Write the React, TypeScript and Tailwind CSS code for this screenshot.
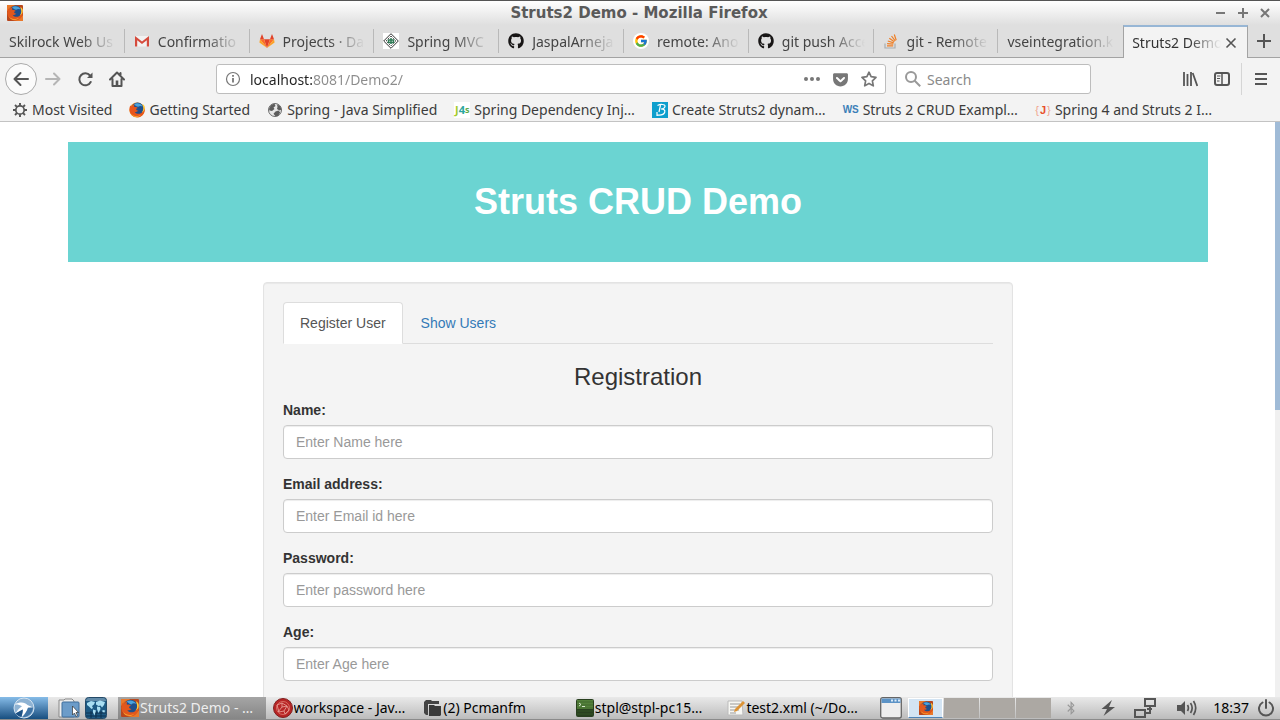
import type { ReactNode } from "react";
import { FaBluetoothB, FaGetPocket, FaGithub } from "react-icons/fa";
import { FcGoogle } from "react-icons/fc";

const svg = "h-4 w-4 shrink-0";

function FirefoxIcon({ size = "h-4 w-4", boxed = false }: { size?: string; boxed?: boolean }) {
  return (
    <svg viewBox="0 0 16 16" className={`${size} shrink-0`} aria-hidden="true">
      {boxed && <rect width="16" height="16" rx="1" fill="#b8461d" />}
      {boxed && <path d="M0 6V0h8L4 5zM16 10v6H6l6-2z" fill="#e9782a" />}
      <circle cx="8" cy="8" r="7.6" fill={boxed ? "#d9641c" : "#f08a1c"} />
      <circle cx="8.6" cy="6.8" r="6.2" fill="#1f4f8c" />
      <path d="M5 2.2C8 .4 12 1.400 13.600 4.500c-1.600-1-3.200-.7-4.400.3-1.600-.4-2.800-1.300-4.200-2.600z" fill="#4aa3dc" />
      <path d="M1.200 3.500C.1 6.200.2 9.500 2 12c2.600 3.600 7.600 4.200 10.900 1.700 2.600-2 3.500-5.300 2.500-8.500-.3 3.400-2 5.900-4.700 6.500-2.600.5-4.400-.5-5.100-2 1.500.5 2.700.1 3.800-.9-1.600-.2-2.300-.9-2.200-2l1.600-.9c-.9-1-2.200-1.200-3.500-.8-.3-1-.2-1.800.2-2.600-1.500.3-2.300 1-2.900 1.900z" fill={boxed ? "#e2571c" : "#e8551b"} />
      <path d="M13.700 3.400c1 2.500.8 5.200-1 7 2.300-.8 3.500-3 3-5.800-.5-1.400-1.100-2-2.200-2.700z" fill="#ffc93a" />
      <path d="M2 11.500c2.400 3 6.700 3.600 10 1.300-2.600 3.300-8.400 2.700-10-1.300z" fill="#f9b233" />
    </svg>
  );
}

function GmailIcon() {
  return (
    <svg viewBox="0 0 16 16" className={svg} aria-hidden="true">
      <path d="M1 3h14v10.500H1z" fill="#f2f2f2" />
      <path d="M1 13.500V3l7 5.500L15 3v10.500h-2.200V7.300L8 11 3.200 7.300v6.200z" fill="#d54b3d" />
    </svg>
  );
}

function GitlabIcon() {
  return (
    <svg viewBox="0 0 16 16" className={svg} aria-hidden="true">
      <path d="M8 15 5 6.200h6z" fill="#e24329" />
      <path d="M8 15 5 6.200H1zM8 15l3-8.800h4z" fill="#fc6d26" />
      <path d="M8 15 .4 9.400 1 6.200zM8 15l7.600-5.600L15 6.200z" fill="#fca326" />
      <path d="M1 6.200 3 1l2 5.200zM15 6.200 13 1l-2 5.200z" fill="#e24329" />
    </svg>
  );
}

function DiamondIcon() {
  return (
    <svg viewBox="0 0 16 16" className={svg} fill="none" aria-hidden="true">
      <rect width="16" height="16" fill="#fff" />
      <path d="M8 .7 15.300 8 8 15.300.7 8z" stroke="#333" />
      <path d="M8 3 13 8l-5 5-5-5z" stroke="#555" strokeDasharray="2 1" />
      <path d="M5.500 7h5v2.500h-5zM8 5v6" stroke="#2f7a55" strokeWidth="1.500" />
    </svg>
  );
}

function StackIcon() {
  return (
    <svg viewBox="0 0 16 16" className={svg} fill="none" aria-hidden="true">
      <path d="M2 10.500V15h10v-4.500" stroke="#a9adb0" strokeWidth="1.200" />
      <path d="M4 12.800h6.200M4.100 10.600l6.200.6M4.800 8l5.900 1.900M6.300 5.300l5 3.500M8.500 3l3.700 4.900M11.300 1.500l1.900 5.800" stroke="#ef7f26" strokeWidth="1.200" />
    </svg>
  );
}

function GoogleBadge() {
  return (
    <span className="flex h-4 w-4 shrink-0 items-center justify-center rounded-full bg-white">
      <FcGoogle size={14} />
    </span>
  );
}

function GlobeIcon() {
  return (
    <svg viewBox="0 0 16 16" className={svg} aria-hidden="true">
      <circle cx="8" cy="8" r="6.500" fill="#e6e6e6" stroke="#6b6b6b" strokeWidth="1" />
      <path d="M2 7c.6-3 3-5 5.500-5.200L8.500 4 6.500 5.500l1 1.500-2.500 2-2.500-.5zM10 2.200l3.300 2 1.200 3.300-2 1-2.500-1.500.5-2zM8.500 9.500l3-1 1.700 2L11 14l-2.500.3-2-2.500z" fill="#5c5c5c" />
    </svg>
  );
}

function GearIcon() {
  return (
    <svg viewBox="0 0 16 16" className={svg} fill="none" stroke="#555" aria-hidden="true">
      <circle cx="8" cy="8" r="4.200" strokeWidth="1.700" />
      <path d="M8 1v2.500M8 12.500V15M1 8h2.500M12.500 8H15M3 3l1.900 1.900M11.100 11.100 13 13M13 3l-1.900 1.900M4.900 11.100 3 13" strokeWidth="1.900" />
    </svg>
  );
}

type Tab = { title: string; icon?: ReactNode };
const tabs: Tab[] = [
  { title: "Skilrock Web Us" },
  { title: "Confirmatio", icon: <GmailIcon /> },
  { title: "Projects · Da", icon: <GitlabIcon /> },
  { title: "Spring MVC", icon: <DiamondIcon /> },
  { title: "JaspalArneja", icon: <FaGithub className="shrink-0 text-[#181616]" size={16} /> },
  { title: "remote: Ano", icon: <GoogleBadge /> },
  { title: "git push Acce", icon: <FaGithub className="shrink-0 text-[#181616]" size={16} /> },
  { title: "git - Remote", icon: <StackIcon /> },
  { title: "vseintegration.k" },
];

const bookmarks: { title: string; icon: ReactNode }[] = [
  { title: "Most Visited", icon: <GearIcon /> },
  { title: "Getting Started", icon: <FirefoxIcon /> },
  { title: "Spring - Java Simplified", icon: <GlobeIcon /> },
  {
    title: "Spring Dependency Inj…",
    icon: (
      <span className="flex h-4 w-4 shrink-0 items-center justify-center bg-white text-[11px] leading-4 font-bold text-[#2ba6a0]" aria-hidden="true">
        <span className="text-[#a3cb2b]">J</span>4<span className="text-[9px] text-[#5daa4a]">s</span>
      </span>
    ),
  },
  {
    title: "Create Struts2 dynam…",
    icon: (
      <svg viewBox="0 0 16 16" className={svg} fill="none" aria-hidden="true">
        <rect width="16" height="16" fill="#0e9fcd" />
        <path d="M5.500 3.500c2.500-1.500 8-1.500 7.500 1-.4 1.800-2.500 2.500-4 2.500 2.500 0 4.500 1 3.700 3.300-.8 2.400-3.700 3-7.200 2.700M8.500 3 7 10M5 10v4" stroke="#fff" strokeWidth="1.200" />
      </svg>
    ),
  },
  {
    title: "Struts 2 CRUD Exampl…",
    icon: (
      <span className="w-4 shrink-0 text-center font-['Liberation_Sans'] text-[10px] leading-4 font-bold text-[#3c7fb8]" aria-hidden="true">
        WS
      </span>
    ),
  },
  {
    title: "Spring 4 and Struts 2 I…",
    icon: (
      <span className="flex w-4 shrink-0 items-center justify-center gap-px font-['Liberation_Sans'] text-[11px] leading-4 text-[#f0a48c]" aria-hidden="true">
        {"{"}<b className="text-[#e8502c]">J</b>{"}"}
      </span>
    ),
  },
];

function TitleBar() {
  return (
    <header className="flex h-[25px] shrink-0 items-center border-t border-[#555] bg-linear-to-b from-white to-[#dfdfdf] px-[7px]">
      <div className="flex flex-1"><FirefoxIcon boxed /></div>
      <h1 className="font-['DejaVu_Sans'] text-[15px] leading-none font-bold text-[#5a5a5a]">Struts2 Demo - Mozilla Firefox</h1>
      <div className="flex flex-1 justify-end gap-2.5 pr-0.5 text-[#777]">
        {[
          { label: "Minimize", d: "M1 6h9" },
          { label: "Maximize", d: "M6 1v10M1 6h10" },
          { label: "Close", d: "M2 2l8 8M10 2l-8 8" },
        ].map((b) => (
          <button key={b.label} aria-label={b.label}>
            <svg viewBox="0 0 12 12" className="h-3 w-3" fill="none" stroke="currentColor" strokeWidth="2"><path d={b.d} /></svg>
          </button>
        ))}
      </div>
    </header>
  );
}

function TabStrip() {
  return (
    <div className="grid h-[33px] shrink-0 grid-cols-[repeat(10,minmax(0,1fr))_32px] bg-[#dfdfdf] text-[14px] text-[#444]">
      {tabs.map((t, i) => (
        <button key={t.title} className="flex min-w-0 items-center border-b border-[#a3a3a3]">
          <span className="flex min-w-0 flex-1 items-center gap-2 pr-2 pl-[9px]">
            {t.icon}
            <span className="flex-1 overflow-hidden text-left whitespace-nowrap [mask-image:linear-gradient(to_right,black_calc(100%-36px),transparent)]">{t.title}</span>
          </span>
          <span className={i < tabs.length - 1 ? "h-6 w-px bg-[#b9b9b9]" : "h-6 w-px"} />
        </button>
      ))}
      <div className="flex min-w-0 items-center gap-1 border-x border-t-2 border-x-[#a3a3a3] border-t-[#97b6d5] bg-[#f3f3f3] pr-2.5 pl-2">
        <button className="min-w-0 flex-1 overflow-hidden text-left whitespace-nowrap text-[#333] [mask-image:linear-gradient(to_right,black_calc(100%-32px),transparent)]">Struts2 Demo</button>
        <button aria-label="Close tab">
          <svg viewBox="0 0 12 12" className="h-3 w-3" fill="none" stroke="#555" strokeWidth="1.600"><path d="M1.500 1.500l9 9M10.500 1.500l-9 9" /></svg>
        </button>
      </div>
      <button aria-label="New tab" className="flex items-center justify-center border-b border-[#a3a3a3]">
        <svg viewBox="0 0 16 16" className="h-4 w-4" fill="none" stroke="#555" strokeWidth="2"><path d="M8 1v14M1 8h14" /></svg>
      </button>
    </div>
  );
}

function NavBar() {
  return (
    <div className="flex h-[42px] shrink-0 items-center pr-[11px] pl-[5px] text-[14px]">
      <button aria-label="Back" className="flex h-8 w-8 items-center justify-center rounded-full border border-[#aaa] bg-[#fbfbfb]">
        <svg viewBox="0 0 16 16" className="h-4 w-4" fill="none" stroke="#555" strokeWidth="2" strokeLinecap="round" strokeLinejoin="round"><path d="M15 8H1.500M7.500 2l-6 6 6 6" /></svg>
      </button>
      <button aria-label="Forward" className="ml-2">
        <svg viewBox="0 0 16 16" className={svg} fill="none" stroke="#b5b5b5" strokeWidth="2" strokeLinecap="round" strokeLinejoin="round"><path d="M1 8h13.500M9 2.500 14.500 8 9 13.500" /></svg>
      </button>
      <button aria-label="Reload" className="ml-4">
        <svg viewBox="0 0 16 16" className={svg} fill="none" stroke="#555" strokeWidth="2" strokeLinecap="round"><path d="M13.700 11A6 6 0 1 1 13 4.500" /><path d="M15.500 1.500V7H10z" fill="#555" stroke="none" /></svg>
      </button>
      <button aria-label="Home" className="ml-4">
        <svg viewBox="0 0 16 16" className={svg} fill="none" stroke="#555" strokeWidth="2" strokeLinejoin="round" strokeLinecap="round"><path d="M1 8.500 8 1.500l7 7M3.500 8v7h9V8M11.500 2v2" /><path d="M6.700 9.500h2.600V15H6.700z" fill="#555" stroke="none" /></svg>
      </button>
      <div className="ml-[91px] flex h-[30px] w-[670px] min-w-0 shrink items-center rounded-[3px] border border-[#bdbdbd] bg-white px-2">
        <svg viewBox="0 0 16 16" className={svg} fill="none" stroke="#777" aria-hidden="true"><circle cx="8" cy="8" r="6.500" strokeWidth="1.200" /><path d="M8 7v4.500M8 4v1.700" strokeWidth="1.800" /></svg>
        <input
          aria-label="Address"
          defaultValue="localhost:8081/Demo2/"
          className="ml-[9px] min-w-0 flex-1 bg-linear-to-r from-[#222] from-[63px] to-[#8c8c8c] to-[63px] bg-clip-text text-transparent caret-black outline-none"
        />
        <div className="flex items-center gap-3 text-[#777]">
          <button aria-label="Page actions"><svg viewBox="0 0 16 16" className={svg} fill="currentColor"><circle cx="2" cy="8" r="2" /><circle cx="8" cy="8" r="2" /><circle cx="14" cy="8" r="2" /></svg></button>
          <button aria-label="Save to Pocket"><FaGetPocket size={17} /></button>
          <button aria-label="Bookmark this page"><svg viewBox="0 0 16 16" className={svg} fill="none" stroke="currentColor" strokeWidth="1.700" strokeLinejoin="round"><path d="m8 1.200 2.100 4.500 4.900.7-3.600 3.400.9 5L8 12.400l-4.300 2.400.9-5L1 6.400l4.900-.7z" /></svg></button>
        </div>
      </div>
      <label className="ml-2.5 flex h-[30px] w-[195px] items-center gap-1.5 rounded-[3px] border border-[#bdbdbd] bg-white px-2">
        <svg viewBox="0 0 16 16" className={svg} fill="none" stroke="#999" strokeWidth="2" aria-hidden="true"><circle cx="6" cy="6" r="5" /><path d="m9.700 9.700 5.500 5.500" /></svg>
        <input type="search" aria-label="Search" placeholder="Search" className="min-w-0 flex-1 outline-none placeholder:text-[#8a8a8a]" />
      </label>
      <div className="ml-auto flex items-center">
        <button aria-label="Library"><svg viewBox="0 0 16 16" className={svg} fill="none" stroke="#555" strokeWidth="1.800"><path d="M2 1v14M5.500 3v12M9 1v14M10.700 2l4.600 13" /></svg></button>
        <button aria-label="Sidebars" className="ml-4"><svg viewBox="0 0 16 16" className={svg} fill="none" stroke="#555"><rect x="1" y="2" width="14" height="12" rx="2" strokeWidth="2" /><path d="M8 2v12" strokeWidth="1.500" /><path d="M3 5h3.500M3 7.500h3M3 10h2.500" /></svg></button>
        <span className="ml-[11px] h-8 w-px bg-[#d5d5d5]" />
        <button aria-label="Open menu" className="ml-[11px]"><svg viewBox="0 0 16 16" className={svg} fill="none" stroke="#555" strokeWidth="2"><path d="M2 3h12M2 8h12M2 13h12" /></svg></button>
      </div>
    </div>
  );
}

function Bookmarks() {
  return (
    <nav aria-label="Bookmarks" className="flex h-[22px] shrink-0 items-start gap-[17px] overflow-hidden border-b border-[#c3c3c3] pl-3 text-[14px] leading-5 text-[#3c3c3c]">
      {bookmarks.map((b) => (
        <a key={b.title} href="#bookmark" className="flex items-center gap-1 whitespace-nowrap">
          {b.icon}
          {b.title}
        </a>
      ))}
    </nav>
  );
}

const fields = [
  { id: "name", label: "Name:", hint: "Enter Name here", type: "text" },
  { id: "email", label: "Email address:", hint: "Enter Email id here", type: "email" },
  { id: "password", label: "Password:", hint: "Enter password here", type: "password" },
  { id: "age", label: "Age:", hint: "Enter Age here", type: "text" },
];

function Page() {
  return (
    <div className="flex min-h-0 flex-1 bg-white">
      <main className="flex-1 overflow-hidden pt-5 pr-4 pl-[17px] font-['Liberation_Sans',Arial,sans-serif] text-[14px] leading-5 text-[#333]">
        <div className="mx-auto max-w-[1140px]">
          <div className="flex h-[120px] items-center justify-center bg-[#6bd4d2]">
            <h2 className="text-[36px] leading-10 font-bold text-white">Struts CRUD Demo</h2>
          </div>
          <section className="mx-auto mt-5 max-w-[750px] rounded-sm border border-[#e3e3e3] bg-[#f4f4f4] p-[19px] shadow-[inset_0_1px_1px_rgba(0,0,0,0.05)]">
            <div role="tablist" className="flex gap-0.5 border-b border-[#ddd]">
              <button role="tab" aria-selected="true" className="-mb-px rounded-t-sm border border-[#ddd] border-b-white bg-white px-4 py-2.5 text-[#555]">Register User</button>
              <button role="tab" aria-selected="false" className="px-4 py-2.5 text-[#337ab7]">Show Users</button>
            </div>
            <form>
              <h3 className="mt-5 mb-2.5 text-center text-[24px] leading-[26px]">Registration</h3>
              {fields.map((f) => (
                <div key={f.id} className="mb-[15px]">
                  <label htmlFor={f.id} className="mb-[5px] block font-bold">{f.label}</label>
                  <input id={f.id} type={f.type} placeholder={f.hint} className="block h-[34px] w-full rounded-sm border border-[#ccc] bg-white px-3 shadow-[inset_0_1px_1px_rgba(0,0,0,0.075)] placeholder:text-[#999]" />
                </div>
              ))}
            </form>
          </section>
        </div>
      </main>
      <div className="w-[5px] shrink-0 bg-[#f0f0f0]">
        <div className="h-1/2 bg-[#a0bbd7]" />
      </div>
    </div>
  );
}

function TaskButton({ icon, title, active = false }: { icon: ReactNode; title: string; active?: boolean }) {
  return (
    <button className={`flex h-full min-w-0 items-center gap-px pl-[3px] whitespace-nowrap ${active ? "mr-1 bg-linear-to-b from-[#a5a5a5] to-[#868686] text-[#eee]" : "text-black"}`}>
      {icon}
      <span className="overflow-hidden">{title}</span>
    </button>
  );
}

function Taskbar() {
  return (
    <footer className="flex h-[23px] shrink-0 items-center border-b border-[#8b8b8b] bg-linear-to-b from-[#e9e9e9] to-[#bcbcbc] text-[14px] leading-5">
      <button aria-label="Start menu" className="flex h-full w-12 items-center justify-center bg-linear-to-b from-[#86bce8] to-[#174f80]">
        <svg viewBox="0 0 24 22" className="h-[22px] w-6">
          <circle cx="12" cy="11" r="10" fill="#8fb3d3" stroke="#d3e3f1" />
          <path d="M2.500 7.500C8 4.500 13 5 15.500 8l5.500 2.500-5 .2c-1 3.500-3 6-6.500 9.300.8-3.500 1.500-5.500 1.200-7.500L3.500 16.500C5.500 13 8 10.500 10 9.300 7.500 7.500 5 7.200 2.500 7.500z" fill="#fff" />
          <path d="M3.500 16.500 10.700 12.500c.3 2-.4 4-1.200 7.500-2.500-.5-4.800-1.700-6-3.500z" fill="#1e5387" />
          <path d="M16 10.700c-1 3.500-3 6.300-5.500 9.500 5.500.3 10.500-4 10.500-9.700z" fill="#3f74a6" />
        </svg>
      </button>
      <button aria-label="File manager" className="ml-2.5">
        <svg viewBox="0 0 22 20" className="h-5 w-[22px]"><path d="M1 19V2h5l1-1h7l2 2v16z" fill="#eee" stroke="#888" /><rect x="4" y="4" width="17" height="15" rx="1" fill="#6c9cc9" stroke="#3e6e9d" /><path d="m14.500 8 0 9 2-2 1.500 3.500 1.500-1-1.500-3h2.500z" fill="#fff" stroke="#333" strokeWidth=".7" /></svg>
      </button>
      <button aria-label="Web browser" className="ml-[5px]">
        <svg viewBox="0 0 22 22" className="h-[22px] w-[22px]"><rect x=".5" y=".5" width="21" height="21" rx="3" fill="#1d5a84" stroke="#244a68" /><path d="M1 16h20M1 19h20M6 14v7M11 14v7M16 14v7" stroke="#0f3350" /><path d="M2 6l4-2 4 1-1 2.500L7 9l1 2-1.500 1L4 9.500 2 8zM8 12.500l3 1-1.500 5-1.500-3zM11 5l4-1.500L20 5l-1 3-2 2.500-1.500-2-2 .5L11 7.500zM12 9.500l3 .5.500 2-2 4-1.500-4zM17.500 13l2.500.5-.5 2-2-.5z" fill="#a9def2" /><path d="M1 4a3 3 0 0 1 3-3h14a3 3 0 0 1 3 3z" fill="#fff" opacity=".3" /></svg>
      </button>
      <div className="ml-[11px] grid h-full w-[758px] min-w-0 shrink grid-cols-5">
        <TaskButton active icon={<FirefoxIcon boxed size="h-[18px] w-[18px]" />} title="Struts2 Demo - …" />
        <TaskButton
          title="workspace - Jav…"
          icon={<svg viewBox="0 0 20 20" className="h-5 w-5 shrink-0"><circle cx="10" cy="10" r="9.500" fill="#b72525" stroke="#802020" /><circle cx="10" cy="10" r="6.500" fill="none" stroke="#e07b70" strokeWidth=".8" /><path d="M4 7l5-2 5 3-3 5-5 1zM14 8l2 4-4 4-1-3M9 5v4l-4 5M9 9l5-1" fill="none" stroke="#eba79e" strokeWidth=".8" /></svg>}
        />
        <TaskButton
          title="(2) Pcmanfm"
          icon={<svg viewBox="0 0 18 18" className="h-[18px] w-[18px] shrink-0"><path d="M0 3l2-2h5l1 1h7v3H4v11H2l-2-2z" fill="#444" /><path d="M5 6h5l1 1h6v9l-1 1H5z" fill="#3a3a3a" /></svg>}
        />
        <TaskButton
          title="stpl@stpl-pc15…"
          icon={<svg viewBox="0 0 18 18" className="h-[18px] w-[18px] shrink-0"><rect width="18" height="18" rx="2" fill="#29401f" /><rect x="1" y="1" width="16" height="9" fill="#53803a" /><path d="M1 3h16M1 6h16M1 9h16M1 12h16M1 15h16" stroke="#3b5f2a" strokeWidth=".7" /><path d="m3 4 2 1.500L3 7M6 7.500h3" fill="none" stroke="#e6f2de" strokeWidth=".9" /></svg>}
        />
        <TaskButton
          title="test2.xml (~/Do…"
          icon={<svg viewBox="0 0 18 18" className="h-[18px] w-[18px] shrink-0"><path d="M1 2h14l1 14H1z" fill="#f7f7f3" stroke="#bbb" /><path d="M3 5h10M3 8h8M3 11h9M3 14h6" stroke="#999" /><path d="m7 13 1-3 8-8 2 2-8 8z" fill="#dc9336" /></svg>}
        />
      </div>
      <button aria-label="Show desktop" className="ml-1">
        <svg viewBox="0 0 22 22" className="h-[22px] w-[22px]"><rect x=".7" y=".7" width="20.600" height="20.300" rx="2" fill="#eee" stroke="#666" strokeWidth="1.300" /><path d="M1.500 1.500h19V6h-19z" fill="#5c93c6" /><path d="M11 3.500h2M14.500 3.500h2M18 3.500h2" stroke="#dcebf7" strokeWidth="2" /></svg>
      </button>
      <div className="ml-1.5 flex h-5 gap-px">
        <button aria-label="Desktop 1" className="flex w-[35px] items-center justify-center border border-white border-b-[#4f83b6] bg-[#d3e4f3]"><FirefoxIcon boxed size="h-3.5 w-3.5" /></button>
        <button aria-label="Desktop 2" className="w-[35px] bg-[#aca8a3]" />
        <button aria-label="Desktop 3" className="w-[35px] bg-[#aca8a3]" />
        <button aria-label="Desktop 4" className="w-[35px] bg-[#aca8a3]" />
      </div>
      <div className="ml-auto flex items-center text-[#555]">
        <FaBluetoothB size={14} className="text-[#999]" />
        <svg viewBox="0 0 16 18" className="ml-[22px] h-[18px] w-4" fill="currentColor" aria-hidden="true"><path d="M12 1 1.500 10H7l-3.500 7L15 8H9z" /></svg>
        <svg viewBox="0 0 22 22" className="ml-[18px] h-[22px] w-[22px]" fill="none" stroke="currentColor" strokeWidth="2" aria-hidden="true"><rect x="11" y="2" width="10" height="7" /><rect x="1" y="13" width="10" height="7" /><path d="M16 9v7h-5M13 12h5" /></svg>
        <svg viewBox="0 0 22 20" className="ml-5 h-5 w-[22px]" fill="none" stroke="currentColor" strokeWidth="1.700" aria-hidden="true"><path d="M1 7h4l4-4v14l-4-4H1z" fill="currentColor" stroke="none" /><path d="M11.500 7c1.200 2 1.200 4 0 6M14.500 5c2.200 3.300 2.200 6.700 0 10M17.500 3c3 4.700 3 9.300 0 14" /></svg>
        <time className="ml-[15px] text-black">18:37</time>
        <button aria-label="Power" className="mr-[5px] ml-2"><svg viewBox="0 0 18 18" className="h-[18px] w-[18px]" fill="none" stroke="currentColor" strokeWidth="2" strokeLinecap="round"><path d="M5.500 3.500a7 7 0 1 0 7 0M9 1v8" /></svg></button>
      </div>
    </footer>
  );
}

export default function App() {
  return (
    <div className="flex h-screen flex-col overflow-hidden bg-[#f3f3f3] font-['Noto_Sans',sans-serif]">
      <TitleBar />
      <TabStrip />
      <NavBar />
      <Bookmarks />
      <Page />
      <Taskbar />
    </div>
  );
}
